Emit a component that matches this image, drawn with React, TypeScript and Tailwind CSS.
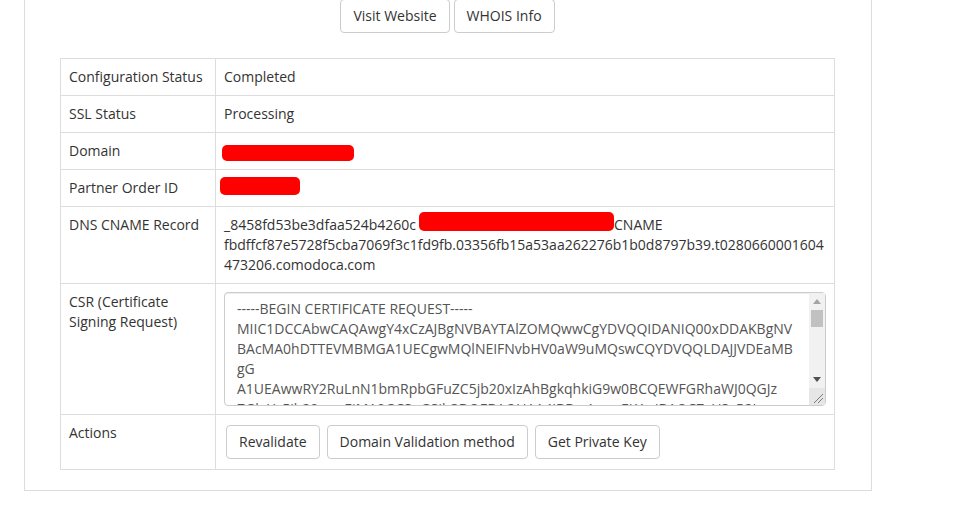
import React from "react";

const csr = `-----BEGIN CERTIFICATE REQUEST-----
MIIC1DCCAbwCAQAwgY4xCzAJBgNVBAYTAlZOMQwwCgYDVQQIDANIQ00xDDAKBgNV
BAcMA0hDTTEVMBMGA1UECgwMQlNEIFNvbHV0aW9uMQswCQYDVQQLDAJJVDEaMB
gG
A1UEAwwRY2RuLnN1bmRpbGFuZC5jb20xIzAhBgkqhkiG9w0BCQEWFGRhaWJ0QGJz
ZGluYy5jb20wggEiMA0GCSqGSIb3DQEBAQUAA4IBDwAwggEKAoIBAQC7vU3zR2Lq
kF9xW0mJb8tQ3eHcYp1sN4aVdR6uLgZo2TfXiKw5Ey7BnMhCjPqSv0UlDrAsOG8e
-----END CERTIFICATE REQUEST-----`;

function Btn({ children }: { children: React.ReactNode }) {
  return (
    <button
      type="button"
      className="shrink-0 whitespace-nowrap rounded-[4px] border border-[#ccc] bg-white px-3 py-[6px] text-[14px] leading-[20px] text-[#333]"
    >
      {children}
    </button>
  );
}

const td = "border border-[#ddd] p-2 align-top";

function FakeScrollbar() {
  return (
    <div className="pointer-events-none absolute bottom-[1px] right-[1px] top-[1px] flex w-[16px] flex-col bg-[#f1f1f1]">
      <div className="flex h-[17px] items-center justify-center">
        <svg width="8" height="5" viewBox="0 0 8 5">
          <path d="M0 5 L4 0 L8 5 Z" fill="#a3a3a3" />
        </svg>
      </div>
      <div className="flex-1 px-[2px]">
        <div className="h-[17px] w-full bg-[#c1c1c1]" />
      </div>
      <div className="flex h-[17px] items-center justify-center">
        <svg width="8" height="5" viewBox="0 0 8 5">
          <path d="M0 0 L8 0 L4 5 Z" fill="#505050" />
        </svg>
      </div>
      <div className="relative h-[17px] bg-[#e6e6e6]">
        <svg className="absolute bottom-0 right-0" width="17" height="17" viewBox="0 0 17 17">
          <path d="M6 15 L15 6" stroke="#7a7a7a" strokeWidth="1" />
          <path d="M10 15 L15 10" stroke="#7a7a7a" strokeWidth="1" />
        </svg>
      </div>
    </div>
  );
}

export default function App() {
  return (
    <div className="min-h-[524px] overflow-hidden bg-white font-['Open_Sans',sans-serif] text-[14px] leading-[20px] text-[#333]">
      <div className="ml-[24px] w-[848px] border-x border-b border-[#ddd] pl-[35px] pr-[36px] pb-[20px]">
        <div className="-mt-px flex justify-center gap-[4px]">
          <Btn>Visit Website</Btn>
          <Btn>WHOIS Info</Btn>
        </div>
        <table className="mt-[25px] w-full table-fixed border-collapse">
          <colgroup>
            <col className="w-[155px]" />
            <col />
          </colgroup>
          <tbody>
            <tr>
              <td className={td}>Configuration Status</td>
              <td className={td}>Completed</td>
            </tr>
            <tr>
              <td className={td}>SSL Status</td>
              <td className={td}>Processing</td>
            </tr>
            <tr>
              <td className={td}>Domain</td>
              <td className={td}>
                <div className="-ml-[2px] mt-[4px] h-[16px] w-[132px] rounded-[5px] bg-[#ff0000]" />
              </td>
            </tr>
            <tr>
              <td className={td}>Partner Order ID</td>
              <td className={td}>
                <div className="-ml-[4px] -mt-px mb-[3px] h-[18px] w-[80px] rounded-[5px] bg-[#ff0000]" />
              </td>
            </tr>
            <tr>
              <td className={td}>DNS CNAME Record</td>
              <td className={`${td} break-words`}>
                _8458fd53be3dfaa524b4260c
                <span className="-mt-[5px] ml-[3px] inline-block h-[19px] w-[195px] rounded-[5px] bg-[#ff0000] align-[-1px]" />
                CNAME fbdffcf87e5728f5cba7069f3c1fd9fb.03356fb15a53aa262276b1b0d8797b39.t0280660001604473206.comodoca.com
              </td>
            </tr>
            <tr>
              <td className={td}>CSR (Certificate Signing Request)</td>
              <td className={td}>
                <div className="relative">
                  <textarea
                    readOnly
                    wrap="off"
                    defaultValue={csr}
                    className="block h-[114px] w-full resize-none overflow-hidden whitespace-pre rounded-[4px] border border-[#ccc] bg-white py-[6px] pl-3 pr-[29px] font-['Open_Sans',sans-serif] text-[14px] leading-[20px] text-[#555] shadow-[inset_0_1px_1px_rgba(0,0,0,0.075)] outline-none"
                  />
                  <FakeScrollbar />
                </div>
              </td>
            </tr>
            <tr>
              <td className={td}>Actions</td>
              <td className={td}>
                <div className="flex gap-[7px] py-[2px] pl-[2px]">
                  <Btn>Revalidate</Btn>
                  <Btn>Domain Validation method</Btn>
                  <Btn>Get Private Key</Btn>
                </div>
              </td>
            </tr>
          </tbody>
        </table>
      </div>
    </div>
  );
}
